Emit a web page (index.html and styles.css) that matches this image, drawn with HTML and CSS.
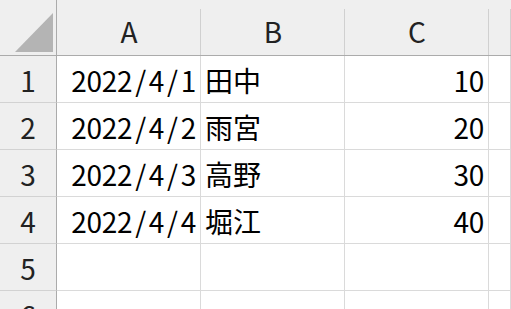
FILE: index.html
```html
<!DOCTYPE html>
<html lang="ja">
<head>
<meta charset="utf-8">
<link rel="stylesheet" href="styles.css">
</head>
<body>
<div class="sheet">
  <div class="corner"><svg width="38" height="39" viewBox="0 0 38 39"><polygon points="38,0 38,39 0,39" fill="#b4b4b4"/></svg></div>
  <div class="colhead">A</div>
  <div class="colhead">B</div>
  <div class="colhead">C</div>
  <div class="colhead last"></div>

  <div class="rowhead">1</div>
  <div class="cell num">2022<span class="sl">/</span>4<span class="sl">/</span>1</div>
  <div class="cell">田中</div>
  <div class="cell num">10</div>
  <div class="cell"></div>

  <div class="rowhead">2</div>
  <div class="cell num">2022<span class="sl">/</span>4<span class="sl">/</span>2</div>
  <div class="cell">雨宮</div>
  <div class="cell num">20</div>
  <div class="cell"></div>

  <div class="rowhead">3</div>
  <div class="cell num">2022<span class="sl">/</span>4<span class="sl">/</span>3</div>
  <div class="cell">高野</div>
  <div class="cell num">30</div>
  <div class="cell"></div>

  <div class="rowhead">4</div>
  <div class="cell num">2022<span class="sl">/</span>4<span class="sl">/</span>4</div>
  <div class="cell">堀江</div>
  <div class="cell num">40</div>
  <div class="cell"></div>

  <div class="rowhead">5</div>
  <div class="cell"></div>
  <div class="cell"></div>
  <div class="cell"></div>
  <div class="cell"></div>

  <div class="rowhead">6</div>
  <div class="cell"></div>
  <div class="cell"></div>
  <div class="cell"></div>
  <div class="cell"></div>
</div>
</body>
</html>
```
FILE: styles.css
```css
html, body {
  margin: 0;
  padding: 0;
  background: #ffffff;
  overflow: hidden;
}
body {
  width: 511px;
  height: 309px;
}
.sheet {
  display: grid;
  grid-template-columns: 57px 144px 144px 144px 1fr;
  grid-template-rows: 56px;
  grid-auto-rows: 47px;
  font-family: "Noto Sans CJK JP", "Noto Sans", sans-serif;
  font-size: 28px;
  color: #000;
}
.sheet > div {
  box-sizing: border-box;
  display: flex;
  align-items: center;
  line-height: 1;
}
.corner {
  background: #efefef;
  border-right: 1px solid #ababab;
  border-bottom: 1px solid #ababab;
  align-items: flex-end !important;
  justify-content: flex-end;
  padding: 0 3px 3px 0;
}
.corner svg {
  display: block;
}
.colhead {
  background: linear-gradient(#d0d0d0, #d0d0d0) right bottom / 1px calc(100% - 9px) no-repeat, #efefef;
  border-bottom: 1px solid #ababab;
  justify-content: center;
  padding-top: 6px;
  color: #222;
}
.rowhead {
  background: #efefef;
  border-right: 1px solid #ababab;
  border-bottom: 1px solid #d2d2d2;
  justify-content: center;
  color: #222;
  padding-top: 2px;
}
.cell {
  border-right: 1px solid #dadada;
  border-bottom: 1px solid #dadada;
  padding: 2px 4px 0 4px;
  white-space: nowrap;
}
.num {
  justify-content: flex-end;
  letter-spacing: -0.3px;
}
.sl {
  padding: 0 3px;
}
```
